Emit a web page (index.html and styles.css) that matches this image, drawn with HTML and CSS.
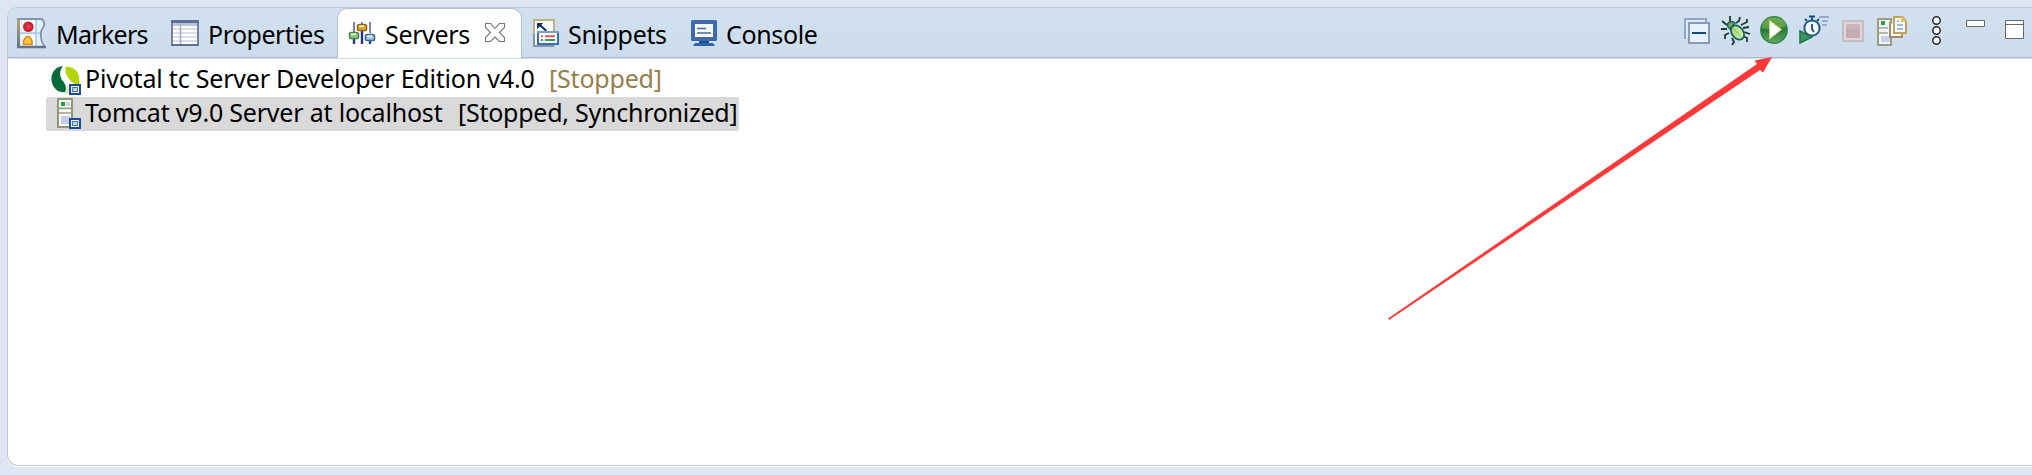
FILE: index.html
```html
<!DOCTYPE html>
<html lang="en">
<head>
<meta charset="utf-8">
<title>Servers</title>
<link rel="stylesheet" href="styles.css">
</head>
<body>
<main class="panel">
  <header class="bar">
    <nav class="tabs">
      <div class="tab tab-markers">
        <svg class="icon" width="30" height="32" viewBox="17 18 30 32">
          <defs>
            <linearGradient id="frame" x1="0" y1="0" x2="0" y2="1"><stop offset="0" stop-color="#bdab6b"/><stop offset="1" stop-color="#65718f"/></linearGradient>
            <radialGradient id="red"><stop offset="0" stop-color="#e8444b"/><stop offset="1" stop-color="#c41425"/></radialGradient>
          </defs>
          <path d="M18 20H42Q45 22 44 26L41 34Q41 40 45 48H18Z" fill="#e3f1fc"/>
          <path d="M22 20H35V33H22ZM22 36H35V47H22Z" fill="#fafdff"/>
          <path d="M36 20V48M20 34H41" stroke="#a9c8e6" stroke-width="1.5"/>
          <rect x="17" y="19" width="3" height="30" fill="url(#frame)"/>
          <path d="M17 20H42Q45 23 44 27Q40 32 41 37Q41 43 45 48" fill="none" stroke="#8593ab" stroke-width="1.8"/>
          <path d="M17 48H46" stroke="#65718f" stroke-width="2.4"/>
          <circle cx="28.3" cy="27.7" r="5.3" fill="url(#red)"/>
          <path d="M23.5 45.5V41.5L26.5 37.5H29L32 41.5V45.5Z" fill="#ffc54a" stroke="#db8a12" stroke-width="1.6"/>
        </svg>
        <span class="label">Markers</span>
      </div>
      <div class="tab tab-properties">
        <svg class="icon" width="28" height="28" viewBox="171 20 28 28">
          <rect x="172" y="22" width="26" height="24" fill="#fff" stroke="#7482a0" stroke-width="2"/>
          <path d="M171 22.5H199" stroke="#5c6f9d" stroke-width="3"/>
          <path d="M173 25.5H197" stroke="#b9c3d8" stroke-width="3"/>
          <path d="M173 30H197M173 34H197M173 38H197M173 42H197" stroke="#cfd5e0" stroke-width="1.3"/>
          <path d="M180.5 24V45" stroke="#a5b0c5" stroke-width="1.6"/>
          <path d="M171 46H199" stroke="#5f6e8c" stroke-width="2"/>
        </svg>
        <span class="label">Properties</span>
      </div>
      <div class="tab tab-servers active">
        <svg class="icon" width="28" height="26" viewBox="348 21 28 26">
          <path d="M354 23V33M362 23V26M370 23V34" stroke="#8086a6" stroke-width="2"/>
          <path d="M354 40V45M362 32V45M370 42V45" stroke="#25329b" stroke-width="2.4"/>
          <rect x="349.5" y="33.5" width="9" height="6" rx="1.8" fill="#8ccc6a" stroke="#4b8554" stroke-width="1.6"/>
          <rect x="357.5" y="25.5" width="9" height="6" rx="1.8" fill="#e1a73c" stroke="#996a12" stroke-width="1.6"/>
          <rect x="365.5" y="35.5" width="9" height="6" rx="1.8" fill="#a1c9e6" stroke="#416694" stroke-width="1.6"/>
          <path d="M351 35.3H356M359 27.3H364M367 37.3H372" stroke="#eef6dd" stroke-width="1.4"/>
        </svg>
        <span class="label">Servers</span>
        <svg class="close" width="20" height="20" viewBox="485 25 20 20">
          <path d="M485.5 25.5H490.5L495 30.5L499.5 25.5H504.5V29.5L499.5 34.5L504.5 39.5V43.5H499.5L495 39L490.5 43.5H485.5V39.5L490.5 34.5L485.5 29.5Z" fill="#fff" stroke="#70747b" stroke-width="1.1"/>
        </svg>
      </div>
      <div class="tab tab-snippets">
        <svg class="icon" width="27" height="28" viewBox="533 21 27 28">
          <rect x="534" y="22" width="20" height="26" fill="#f5faff" stroke="#bcb27f" stroke-width="2"/>
          <path d="M534 36V48H554" fill="none" stroke="#8493a9" stroke-width="2"/>
          <path d="M537 25H543L541.3 27L547 32L545.5 33.5L540 28.5L537 31Z" fill="#14305c"/>
          <rect x="538" y="34" width="20" height="12" fill="#fff" stroke="#376fae" stroke-width="2"/>
          <path d="M537 34H559" stroke="#7ba0cd" stroke-width="2"/>
          <path d="M541 38.2H543M545 38.2H555" stroke="#ec4d56" stroke-width="2"/>
          <path d="M541 42H543M545 42H555" stroke="#409a5d" stroke-width="2"/>
        </svg>
        <span class="label">Snippets</span>
      </div>
      <div class="tab tab-console">
        <svg class="icon" width="27" height="28" viewBox="691 20 27 28">
          <rect x="691" y="21" width="26" height="21" rx="1.5" fill="#346bb8"/>
          <rect x="693.5" y="23.5" width="21" height="16" fill="#53688f"/>
          <rect x="695" y="25" width="18" height="13" fill="#f1f8ff"/>
          <path d="M697 29.5H706M697 34H711" stroke="#4b679f" stroke-width="1.7"/>
          <path d="M699 42H709V44H699Z" fill="#234d83"/>
          <path d="M695 44H713L715 47H693Z" fill="#2d63a7"/>
        </svg>
        <span class="label">Console</span>
      </div>
    </nav>
    <div class="tools">
      <svg width="348" height="36" viewBox="1684 14 348 36">
        <defs>
          <linearGradient id="run" x1="0" y1="0" x2="0" y2="1"><stop offset="0" stop-color="#5f9d4d"/><stop offset=".5" stop-color="#2f7a39"/><stop offset="1" stop-color="#62ac61"/></linearGradient>
          <linearGradient id="bug" x1="0" y1="0" x2="1" y2="1"><stop offset="0" stop-color="#8fcf65"/><stop offset="1" stop-color="#edf7be"/></linearGradient>
        </defs>
        <!-- collapse all -->
        <g fill="#e6f3fd">
          <path d="M1685 39V19H1706V24" fill="#d9ecfb" stroke="#94a6c6" stroke-width="2"/>
          <rect x="1689" y="23" width="20" height="20" stroke="#8b99b8" stroke-width="2"/>
          <path d="M1692 33H1706" stroke="#15487f" stroke-width="2"/>
        </g>
        <!-- debug -->
        <g fill="none" stroke="#1b3a36" stroke-width="1.8">
          <path d="M1730 16V21L1733 23M1736 23L1739 21L1740 17M1727 25L1722 21M1727 29H1721M1729 33L1725 35V39M1732 38L1734 42L1732 45M1741 25L1747 22V19M1743 28L1749 27M1744 32L1750 34M1743 36L1747 38V42"/>
          <ellipse cx="1737.5" cy="32.5" rx="5.6" ry="8" fill="url(#bug)" stroke="#14635d" transform="rotate(-38 1737.5 32.5)"/>
          <path d="M1728 27C1726 22 1732 20 1735 23L1730 29Z" fill="#78a957" stroke="#14635d" stroke-width="1.5"/>
          <path d="M1733 28L1742 38" stroke="#8ab174" stroke-width="1"/>
        </g>
        <!-- run -->
        <circle cx="1774" cy="30" r="13.2" fill="url(#run)" stroke="#2f864a" stroke-width="1.5"/>
        <path d="M1762 28Q1762 18 1774 17.5Q1786 18 1786 26Q1774 31 1762 28Z" fill="#8cbf57" opacity=".45"/>
        <path d="M1769.5 20.5L1781.5 29.5L1769.5 39Z" fill="#fff" stroke="#bce56c" stroke-width=".9"/>
        <!-- profile -->
        <path d="M1819 17H1829M1822 21H1828M1822 25H1827" stroke="#7f98c4" stroke-width="1.6"/>
        <circle cx="1812" cy="28" r="7.6" fill="#f4fcff" stroke="#285983" stroke-width="2"/>
        <circle cx="1812" cy="28" r="8.6" fill="none" stroke="#61a5d6" stroke-width="1" stroke-dasharray="2 2"/>
        <path d="M1809 16.5H1815M1812 16V20M1805 19L1807 21M1817 21L1819 19M1812 24V29L1814 32" fill="none" stroke="#1d4b75" stroke-width="1.8"/>
        <path d="M1800 31L1812 37L1800 43Z" fill="#3b9561" stroke="#217444" stroke-width="1.5"/>
        <!-- stop, disabled -->
        <rect x="1843" y="21" width="20" height="20" fill="#e4d5d9" stroke="#c3bec1" stroke-width="2"/>
        <rect x="1846" y="24" width="14" height="14" fill="#c5abb2"/>
        <path d="M1846 24H1860V29H1846Z" fill="#cbb5b9"/>
        <!-- publish -->
        <path d="M1878 19H1891V45H1878Z" fill="#f3f6f8" stroke="#9a9f7f" stroke-width="2"/>
        <path d="M1881 21H1885V25H1881Z" fill="#2da442"/>
        <path d="M1879 28H1888M1879 33H1888" stroke="#a3a991" stroke-width="1.7"/>
        <path d="M1881 36H1890V42H1881Z" fill="#c7d0eb"/>
        <path d="M1890 22V37H1902V33" fill="#fff" stroke="#a18b68" stroke-width="2"/>
        <path d="M1894 17H1902L1906 21V33H1894Z" fill="#f3f9ff" stroke="#c4a352" stroke-width="2"/>
        <path d="M1901 16V22H1907Z" fill="#e9bf67"/>
        <path d="M1897 21H1899M1897 25H1903M1897 29H1903" stroke="#8ba4d2" stroke-width="1.5"/>
        <!-- view menu -->
        <g fill="#fff" stroke="#252a30" stroke-width="1.5"><circle cx="1936.5" cy="20.5" r="3.7"/><circle cx="1936.5" cy="30.5" r="3.7"/><circle cx="1936.5" cy="40.5" r="3.7"/></g>
        <!-- minimize and maximize -->
        <path d="M1966.5 20.5H1984.5V26.5H1966.5ZM2005.5 20.5H2023.5V38.5H2005.5ZM2005.5 24.5H2023.5" fill="#fff" stroke="#686868"/>
      </svg>
    </div>
  </header>
  <section class="tree">
    <div class="row">
      <svg class="server-icon" width="32" height="30" viewBox="50 64 32 30">
        <path d="M63 65C53 66 50 75 52 82C54 89 60 92 65 91C67 88 66 83 62 79C59 73 60 69 63 65Z" fill="#086c3a"/>
        <path d="M66 65.500C76 66 81 73 79 83H75C73 82 72 81 71 80C67 76 64 71 66 65.500Z" fill="#b3d60b"/>
        <path d="M67 83Q70 87 68 92L66 93Q68 88 67 83Z" fill="#cfe36a"/>
        <rect x="69" y="83" width="12" height="11" fill="#fff"/>
        <rect x="70" y="84" width="10" height="9" fill="#e8f0fa" stroke="#1c4c99" stroke-width="2"/><rect x="72.5" y="86.5" width="5" height="4" fill="#c5d6ec" stroke="#5276b2"/>
      </svg>
      <span class="name name-pivotal">Pivotal tc Server Developer Edition v4.0</span><span class="state state-pivotal">[Stopped]</span>
    </div>
    <div class="row selected">
      <svg class="server-icon" width="32" height="32" viewBox="50 97 32 32">
        <rect x="58" y="98" width="14" height="28" fill="#f8faf6" stroke="#929778" stroke-width="2"/>
        <path d="M61 101H65V105H61Z" fill="#259c37"/><path d="M66 101H70V105H66Z" fill="#cbd1e5"/>
        <path d="M59 107.3H71M59 112H71" stroke="#999e84" stroke-width="1.7"/><path d="M61 115H70V123H61Z" fill="#c5cde5"/>
        <rect x="70" y="118" width="10" height="9" fill="#e8f0fa" stroke="#1c4c99" stroke-width="2"/><rect x="72.5" y="120.5" width="5" height="4" fill="#c5d6ec" stroke="#5276b2"/>
      </svg>
      <span class="name name-tomcat">Tomcat v9.0 Server at localhost</span><span class="state state-tomcat">[Stopped, Synchronized]</span>
    </div>
  </section>
</main>
<svg class="arrow" width="390" height="268" viewBox="1385 55 390 268">
  <path d="M1388 318.600L1757 64L1754.500 60.500L1772 57L1763 72.500L1760 70L1389 320Z" fill="#fc3939"/>
</svg>
</body>
</html>
```
FILE: styles.css
```css
* { box-sizing: border-box; }
body {
  margin: 0;
  width: 2032px;
  height: 475px;
  padding: 7px 0 8px 7px;
  overflow: hidden;
  background: #dfe5f5;
  font-family: "Noto Sans", "Open Sans", sans-serif;
  font-size: 25px;
  color: #000;
}
svg { display: block; flex: none; }
.panel {
  height: 459px;
  border: 1px solid #c5c8cc;
  border-right: 0;
  border-radius: 11px 0 0 11px;
  background: #fff;
  box-shadow: 0 1px #fff;
  overflow: hidden;
}
.bar {
  display: flex;
  justify-content: space-between;
  height: 51px;
  background: linear-gradient(#d2e1ef, #cddcec);
  box-shadow: inset 0 -1px #cfdded, inset 0 -2px #adbad2;
}
.tabs { display: flex; padding-left: 9px; }
.tab { display: flex; align-items: center; height: 51px; padding-bottom: 1px; white-space: nowrap; }
.label { line-height: 34px; padding-top: 1px; letter-spacing: -0.35px; }
.tab-markers { width: 154px; gap: 9px; }
.tab-markers .label { letter-spacing: -0.7px; }
.tab-properties { width: 166px; gap: 9px; }
.tab-properties .label { letter-spacing: -0.5px; }
.tab-servers { width: 185px; gap: 9px; padding-left: 10px; }
.tab-servers .label { width: 91px; }
.tab-snippets { width: 169px; gap: 8px; padding-left: 11px; }
.tab-console { gap: 8px; }
.active {
  background: #fff;
  border: 1px solid #b4c0d5;
  border-bottom: 1px solid #cfdded;
  border-radius: 10px 10px 0 0;
}
.tools { padding-top: 6px; }
.tree { padding-top: 4px; }
.row {
  display: flex;
  align-items: center;
  width: 693px;
  height: 34px;
  margin-left: 38px;
  padding-left: 4px;
  border-radius: 2px;
  white-space: pre;
}
.selected { background: #d9d9d9; }
.name,
.state { line-height: 34px; padding-bottom: 4px; letter-spacing: -0.2px; }
.name { margin-left: 3px; }
.name-pivotal { width: 464px; }
.name-tomcat { width: 373px; }
.state-pivotal { color: #96804a; }
.state-tomcat { letter-spacing: -0.25px; }
.arrow { position: absolute; left: 1385px; top: 55px; }
```
